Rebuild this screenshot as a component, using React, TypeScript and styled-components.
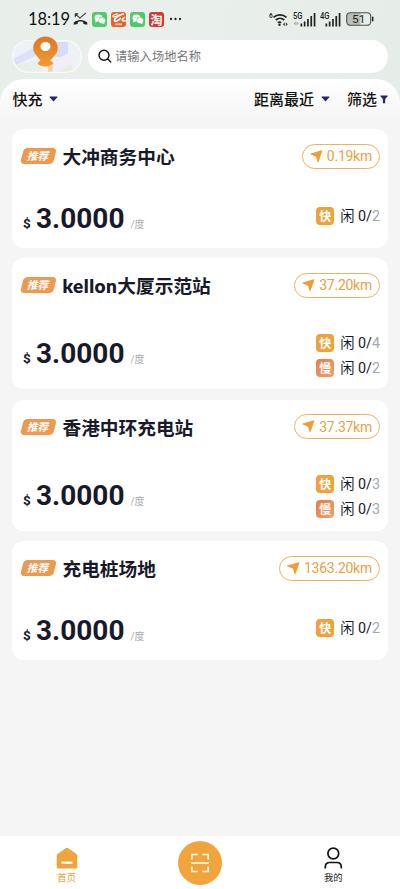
import React from 'react';
import styled, { createGlobalStyle } from 'styled-components';

const Global = createGlobalStyle`
  * { box-sizing: border-box; }
  body { margin: 0; background: #f5f5f5; font-family: Roboto, "Noto Sans CJK SC", sans-serif; color: #191a29; }
`;

const Screen = styled.main`
  width: 400px; height: 889px; overflow: hidden;
  display: flex; flex-direction: column;
  background: #f5f5f5;
`;

const Header = styled.header`
  height: 121px; flex: none;
  display: flex; flex-direction: column;
  background: linear-gradient(100deg, #e8efeb 0%, #e9f0ec 45%, #e6ede8 100%);
`;

const StatusBar = styled.div`
  height: 38px; flex: none;
  padding: 0 26px 0 28px;
  display: flex; align-items: center; justify-content: space-between;
`;
const StatusGroup = styled.div<{ $gap: number }>`
  display: flex; align-items: center; gap: ${p => p.$gap}px;
  svg { display: block; }
`;
const Clock = styled.span`
  width: 41px; font: 400 16.5px/20px Lato, sans-serif; letter-spacing: -0.1px; color: #111;
  white-space: nowrap;
`;
const AppBadge = styled.span<{ $bg: string }>`
  width: 15px; height: 15px; border-radius: 3px; background: ${p => p.$bg};
  display: flex; align-items: center; justify-content: center;
  color: #fff; font: 700 12px/15px "Noto Sans CJK SC", sans-serif;
`;

const SearchRow = styled.div`
  height: 41px; flex: none; padding: 2px 12px 6px;
  display: flex; gap: 6px; align-items: flex-start;
`;
const MapButton = styled.div`
  width: 70px; height: 33px; flex: none;
  svg { display: block; overflow: visible; }
`;
const SearchBox = styled.div`
  flex: 1; height: 33px; border-radius: 17px; background: #fff; padding: 0 0 1px 10px;
  display: flex; align-items: center; gap: 3px;
  font-size: 12.3px; color: #777;
`;

const FilterBar = styled.div`
  height: 42px; flex: none; padding: 0 12px 2px 12.5px;
  border-radius: 24px 24px 0 0;
  background: linear-gradient(#fff, #f5f5f5);
  display: flex; align-items: center;
`;
const Filter = styled.div<{ $gap: number }>`
  display: flex; align-items: center; gap: ${p => p.$gap}px;
  font: 500 15px/20px "Noto Sans CJK SC", sans-serif; color: #111;
  svg { display: block; }
`;
const FilterGroup = styled.div`
  margin-left: auto; display: flex; align-items: center; gap: 17px;
`;

const List = styled.section`
  flex: 1; padding: 8px 12px 0;
  display: flex; flex-direction: column; gap: 10.5px;
`;
const Card = styled.article<{ $tall: boolean }>`
  height: ${p => (p.$tall ? 131 : 118.5)}px; flex: none;
  padding: 14px 8px ${p => (p.$tall ? 11 : 10)}px 10px;
  border-radius: 12px; background: #fff;
  display: flex; flex-direction: column; justify-content: space-between;
`;
const TitleRow = styled.div`
  height: 26px; display: flex; align-items: center;
`;
const Tag = styled.span`
  width: 33px; height: 15.5px; margin-right: 7.5px; flex: none;
  border-radius: 4px; background: #ee9950; transform: skewX(-14deg);
  color: #fff; font: 700 10.7px/15px "Noto Sans CJK SC", sans-serif; text-align: center;
`;
const Name = styled.h2`
  margin: 0; flex: 1; font: 700 18.7px/26px "Noto Sans CJK SC", sans-serif;
  white-space: nowrap;
`;
const Latin = styled.span`
  font-family: Lato, sans-serif; font-weight: 800; font-size: 19px; letter-spacing: 0.45px;
`;
const Distance = styled.span`
  height: 25px; padding: 0 7px; border: 1px solid #eab35e; border-radius: 13px;
  display: flex; align-items: center; gap: 4px;
  font: 400 14px/22px Roboto, sans-serif; letter-spacing: -0.25px; color: #e8a244; white-space: nowrap;
  svg { display: block; }
`;
const BottomRow = styled.div`
  display: flex; justify-content: space-between; align-items: flex-end;
`;
const Price = styled.div<{ $tall: boolean }>`
  display: flex; align-items: baseline; line-height: 34px;
  margin-bottom: ${p => (p.$tall ? 1 : -4)}px;
`;
const Currency = styled.span`font-size: 13.5px; font-weight: 700; width: 14px; padding-left: 1px;`;
const Amount = styled.span`font-size: 28px; font-weight: 700;`;
const Unit = styled.span`font-size: 10px; color: #aaaab0; margin-left: 6px;`;
const Ports = styled.div<{ $tall: boolean }>`
  display: flex; flex-direction: column; gap: 7px;
  margin-bottom: ${p => (p.$tall ? 1.5 : 12.5)}px;
`;
const Port = styled.div`
  height: 18px; display: flex; align-items: center;
  font: 400 14.3px/18px Roboto, "Noto Sans CJK SC", sans-serif; white-space: pre;
`;
const PortBadge = styled.span<{ $slow: boolean }>`
  width: 18px; height: 18px; margin-right: 6px; border-radius: 4px;
  background: ${p => (p.$slow ? 'linear-gradient(135deg, #e67e42, #eda273)' : '#efa23b')};
  color: #fff; font: 700 12px/17px "Noto Sans CJK SC", sans-serif; text-align: center;
`;
const Total = styled.span`color: #a5a5ab;`;

const Nav = styled.nav`
  height: 53px; flex: none; background: #fff;
  display: grid; grid-template-columns: repeat(3, 133.33px);
  justify-items: center; align-items: start;
`;
const NavItem = styled.div<{ $active?: boolean }>`
  padding-top: 10.5px; display: flex; flex-direction: column; align-items: center; gap: 1.5px;
  font: 400 9.3px/14px "Noto Sans CJK SC", sans-serif; color: ${p => (p.$active ? '#eca03d' : '#222')};
  svg { display: block; }
`;
const ScanButton = styled.div`
  width: 44px; height: 44px; margin-top: 4.5px; border-radius: 50%; background: #f1a43b;
  display: flex; align-items: center; justify-content: center;
`;

const MissedCall = () => (
  <svg width="15" height="15" viewBox="0 0 16 15" fill="none">
    <path d="M2 1.500h3.500M2.400 1.500v3.500M2.400 1.500l5 4.500 6.500-5.500" stroke="#333" strokeWidth="1.100" />
    <path d="M.8 13.200v-2.500c3.500-3.600 10.900-3.600 14.400 0v2.500l-4-.9-.5-2.100c-1.500-.6-3.900-.6-5.400 0l-.5 2.100z" fill="#222" />
  </svg>
);
const WeChat = () => (
  <AppBadge $bg="#50c86c">
    <svg width="12" height="11" viewBox="0 0 12 11">
      <ellipse cx="4.500" cy="4" rx="4" ry="3.400" fill="#fff" />
      <path d="M1.500 6l-.3 2.500L4 7z" fill="#fff" />
      <ellipse cx="8" cy="6.600" rx="3.500" ry="3" fill="#fff" stroke="#50c86c" strokeWidth=".6" />
      <path d="M8 9l2.300 1.300L10.500 8z" fill="#fff" />
      <g fill="#50c86c"><circle cx="3.200" cy="3.200" r=".55" /><circle cx="5.900" cy="3.200" r=".55" /><circle cx="7" cy="6" r=".45" /><circle cx="9.200" cy="6" r=".45" /></g>
    </svg>
  </AppBadge>
);
const Swoosh = () => (
  <AppBadge $bg="#ea612f">
    <svg width="15" height="15" viewBox="0 0 15 15" fill="none" stroke="#fff" strokeLinecap="round">
      <path d="M6.500 1.800C2 2.300.8 4.500 2.600 4.900c2.600.5 4.800-2.600 9.600-2.900" strokeWidth="1.200" />
      <path d="M12.200 2C7 3.200 3.200 6.800 3.500 8.700c.4 1.700 4.200-.2 6-2.400M13.500 5.500c-2 1.200-3.500 3.200-.8 3.600l1.500-.4" strokeWidth="1.500" />
      <path d="M4 12.300h7" strokeWidth="1.700" strokeOpacity=".65" strokeLinecap="butt" />
    </svg>
  </AppBadge>
);
const Wifi = () => (
  <svg width="20" height="15" viewBox="0 0 20 15" fill="none" stroke="#222" strokeWidth="1.700">
    <text x="0" y="6" fontSize="6.500" fontWeight="600" fontFamily="Roboto" fill="#222" stroke="none">6</text>
    <path d="M4.500 5.300c3.700-3.300 9.300-3.300 13 0M6.800 8c2.500-2.200 6-2.200 8.400 0M8.800 10.700c1.300-1 2.200-1 3.500 0" />
    <circle cx="10.500" cy="12.800" r="1.200" fill="#222" stroke="none" />
    <path d="M13.800 12.300l2-2v4zM18.800 12.300l-2-2v4z" fill="#444" stroke="none" />
  </svg>
);
const Signal = ({ label, data }: { label: string; data?: boolean }) => (
  <svg width={data ? 23 : 22} height="15" viewBox={data ? '0 0 23 15' : '0 0 22 15'} fill="#222">
    <text x="0" y="7" fontSize="8.500" fontWeight="500" fontFamily="Roboto" textLength="9.500" lengthAdjust="spacingAndGlyphs">{label}</text>
    {data && <path d="M.5 11.500l2.200-2v4zM5.700 11.500l-2.200-2v4z" fill="#aaa" />}
    {[3, 5, 7.500, 10.500, 13.500].map((h, i) => <rect key={i} x={(data ? 7.500 : 5.500) + i * 3.300} y={14.500 - h} width="1.700" height={h} />)}
  </svg>
);
const Battery = () => (
  <svg width="28" height="14" viewBox="0 0 28 14">
    <path d="M4 .7h10.500v12.600H4A3.300 3.300 0 0 1 .7 10V4A3.300 3.300 0 0 1 4 .7z" fill="#b8beba" />
    <rect x=".7" y=".7" width="24" height="12.600" rx="3.600" fill="none" stroke="#4a504d" strokeWidth="1.100" />
    <path d="M26.700 4.700v4.600" stroke="#222" strokeWidth="1.500" />
    <text x="12.700" y="11.200" textAnchor="middle" fontSize="11.800" fontFamily="Roboto" fill="#222">51</text>
  </svg>
);
const MapArt = () => (
  <svg width="70" height="33" viewBox="0 0 70 33">
    <defs>
      <clipPath id="pill"><rect width="70" height="33" rx="16.500" /></clipPath>
      <linearGradient id="pin" x2="0" y2="1"><stop stopColor="#df7624" /><stop offset="1" stopColor="#f09a31" /></linearGradient>
    </defs>
    <g clipPath="url(#pill)">
      <rect width="70" height="33" fill="#eef1f5" />
      <path d="M1 19L25 6v9L4 25z" fill="#dce1fa" /><path d="M43 2h13v15H34z" fill="#d5dcf8" />
      <path d="M4 25l24-5 3 13H8z" fill="#e6f0e8" /><path d="M46 28l12-6 5 11H44z" fill="#e2f0e0" />
      <path d="M27 33l5-8 27-13 8 6-22 15z" fill="#f1eef7" /><path d="M36 26h4.500v7H36z" fill="#f3cfae" />
    </g>
    <rect x=".6" y=".6" width="68.800" height="31.800" rx="15.900" fill="none" stroke="#f9fbfb" strokeWidth="1.300" />
    <ellipse cx="33.500" cy="23.300" rx="7.600" ry="3.200" fill="#ed9a36" />
    <path d="M33.500-3.500c-7 0-12.300 5.200-12.300 11.500 0 6.500 6 8.500 8.600 15.400 1.400 2.200 6 2.200 7.400 0C39.800 16.500 45.800 14.500 45.800 8c0-6.300-5.300-11.500-12.300-11.500z" fill="url(#pin)" />
    <ellipse cx="33.500" cy="6.500" rx="5" ry="4.600" fill="#fff" />
  </svg>
);
const SearchIcon = () => (
  <svg width="14" height="14" viewBox="0 0 14 14" fill="none" stroke="#111" strokeWidth="1.400" strokeLinecap="round">
    <circle cx="6" cy="6.300" r="5" /><path d="M9.700 10l3 3" />
  </svg>
);
const Caret = () => <svg width="9" height="6" viewBox="0 0 9 6"><path d="M1 .5h7q.8 0 .3.700L5 5q-.5.500-1 0L.7 1.200Q.2.500 1 .5z" fill="#202a61" /></svg>;
const Funnel = () => <svg width="8" height="9" viewBox="0 0 8 9"><path d="M.6.500h6.800q.5.300.2.800L5.200 4v4.200H2.900V4L.4 1.300Q.1.800.6.500z" fill="#202a61" /></svg>;
const Arrow = () => <svg width="13" height="13" viewBox="0 0 13 13"><path d="M.3 4.300Q0 3.700.7 3.500L11.700.3q.9-.1.600.8L8.500 12q-.5.700-.9 0L6 6.800z" fill="#ee9e35" /></svg>;

type Station = { latin?: string; name: string; distance: string; ports: [string, number][] };
const stations: Station[] = [
  { name: '大冲商务中心', distance: '0.19km', ports: [['快', 2]] },
  { latin: 'kellon', name: '大厦示范站', distance: '37.20km', ports: [['快', 4], ['慢', 2]] },
  { name: '香港中环充电站', distance: '37.37km', ports: [['快', 3], ['慢', 3]] },
  { name: '充电桩场地', distance: '1363.20km', ports: [['快', 2]] },
];

const StationCard = ({ station }: { station: Station }) => {
  const tall = station.ports.length > 1;
  return (
    <Card $tall={tall}>
      <TitleRow>
        <Tag>推荐</Tag>
        <Name>{station.latin && <Latin>{station.latin}</Latin>}{station.name}</Name>
        <Distance><Arrow />{station.distance}</Distance>
      </TitleRow>
      <BottomRow>
        <Price $tall={tall}><Currency>$</Currency><Amount>3.0000</Amount><Unit>/度</Unit></Price>
        <Ports $tall={tall}>
          {station.ports.map(([kind, total]) => (
            <Port key={kind}><PortBadge $slow={kind === '慢'}>{kind}</PortBadge>闲 0/<Total>{total}</Total></Port>
          ))}
        </Ports>
      </BottomRow>
    </Card>
  );
};

export default function App() {
  return (
    <>
      <Global />
      <Screen>
        <Header>
          <StatusBar>
            <StatusGroup $gap={4}>
              <Clock>18:19</Clock><MissedCall /><WeChat /><Swoosh /><WeChat /><AppBadge $bg="#d9382c">淘</AppBadge>
              <svg width="14" height="4" viewBox="0 0 14 4" fill="#222"><circle cx="3" cy="2" r="1.150" /><circle cx="7.500" cy="2" r="1.150" /><circle cx="12" cy="2" r="1.150" /></svg>
            </StatusGroup>
            <StatusGroup $gap={4}><Wifi /><Signal label="5G" data /><Signal label="4G" /><Battery /></StatusGroup>
          </StatusBar>
          <SearchRow><MapButton><MapArt /></MapButton><SearchBox><SearchIcon />请输入场地名称</SearchBox></SearchRow>
          <FilterBar>
            <Filter $gap={6}>快充<Caret /></Filter>
            <FilterGroup>
              <Filter $gap={7}>距离最近<Caret /></Filter>
              <Filter $gap={3}>筛选<Funnel /></Filter>
            </FilterGroup>
          </FilterBar>
        </Header>
        <List>{stations.map(s => <StationCard key={s.name} station={s} />)}</List>
        <Nav>
          <NavItem $active>
            <svg width="22" height="22" viewBox="0 0 22 22"><path d="M11 .7q.6 0 1 .4l8.500 6q.8.600.8 1.500v11.600q0 1.300-1.300 1.300H2Q.7 21.500.7 20.200V8.600q0-.9.800-1.500l8.500-6q.4-.4 1-.4z" fill="#f1a43b" /><path d="M5.500 15.700h11" stroke="#fff" strokeWidth="2.200" /></svg>
            首页
          </NavItem>
          <ScanButton>
            <svg width="20" height="20" viewBox="0 0 20 20" fill="none" stroke="#fff" strokeWidth="1.500"><path d="M1.800 6.500V1.500h6M12.200 1.500h6v5M1.800 13.500v5h6M12.200 18.500h6v-5M1 9.900h18" /></svg>
          </ScanButton>
          <NavItem>
            <svg width="20" height="22" viewBox="0 0 20 22" fill="none" stroke="#111" strokeWidth="1.700"><circle cx="10.300" cy="6.500" r="5.400" /><path d="M2.300 21.500v-1.500q0-4.500 4.500-4.500h7q4.500 0 4.500 4.500v1.500" /></svg>
            我的
          </NavItem>
        </Nav>
      </Screen>
    </>
  );
}
